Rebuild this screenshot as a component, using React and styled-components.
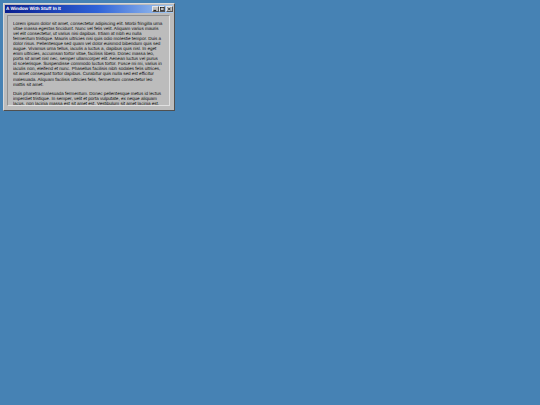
import React from "react";
import styled, { createGlobalStyle } from "styled-components";

const GlobalStyle = createGlobalStyle`
*{
  margin:0;
  padding:0;
  box-sizing:border-box;
}
body{
  background-color:#4682b4;
  width:540px;
  height:405px;
  overflow:hidden;
}`

const Desktop = styled.div`
width:540px;
height:405px;
padding:3px;`

const Window = styled.div`
width:172px;
height:108px;
display:flex;
flex-direction:column;
padding:1px;
background-color:#bcbcbc;
border-top:1px solid #d8d8d8;
border-left:1px solid #d8d8d8;
border-right:1px solid #505050;
border-bottom:1px solid #505050;`

const TitleBar = styled.div`
height:8px;
flex:none;
display:flex;
align-items:center;
justify-content:space-between;
padding:0 0.5px 0 1px;
background:linear-gradient(to right,#0a1f8f,#2f63d8 55%,#a6caf0);`

const Title = styled.span`
font-family:"Liberation Sans",Arial,sans-serif;
font-size:4.65px;
font-weight:bold;
line-height:8px;
color:#fff;
white-space:nowrap;
text-rendering:geometricPrecision;`

const Controls = styled.div`
display:flex;
align-items:center;`

const Control = styled.button`
width:6.5px;
height:6px;
margin-left:${props => props.$gap ? "1px" : "0"};
display:flex;
align-items:center;
justify-content:center;
background-color:#c0c0c0;
border:none;
border-top:1px solid #e8e8e8;
border-left:1px solid #e8e8e8;
border-right:1px solid #555;
border-bottom:1px solid #555;
svg{
  display:block;
  width:4.5px;
  height:4px;
}`

const Pane = styled.div`
flex:1;
min-height:0;
margin:2px 3px 3px 2px;
padding:4.5px 5px 0;
overflow:hidden;
background-color:#bcbcbc;
border-top:1px solid #909090;
border-left:1px solid #909090;
border-right:1px solid #e0e0e0;
border-bottom:1px solid #e0e0e0;`

const Paragraph = styled.p`
font-family:"Liberation Sans",Arial,sans-serif;
font-size:4.55px;
line-height:5.1px;
color:#000;
margin-bottom:4px;
opacity:0.95;
text-rendering:geometricPrecision;`

const Line = styled.span`
display:block;
white-space:nowrap;`

const first = [
  "Lorem ipsum dolor sit amet, consectetur adipiscing elit. Morbi fringilla urna",
  "vitae massa egestas tincidunt. Nunc vel felis velit. Aliquam varius mauris",
  "vel elit consectetur, ut varius nisi dapibus. Etiam at nibh eu nulla",
  "fermentum tristique. Mauris ultricies nisi quis odio molestie tempor. Duis a",
  "dolor risus. Pellentesque sed quam vel dolor euismod bibendum quis sed",
  "augue. Vivamus urna tellus, iaculis a luctus a, dapibus quis nisl. In eget",
  "enim ultricies, accumsan tortor vitae, facilisis libero. Donec massa leo,",
  "porta sit amet nisl nec, semper ullamcorper elit. Aenean luctus vel purus",
  "id scelerisque. Suspendisse commodo luctus tortor. Fusce mi mi, varius in",
  "iaculis non, eleifend et nunc. Phasellus facilisis nibh sodales felis ultrices,",
  "sit amet consequat tortor dapibus. Curabitur quis nulla sed est efficitur",
  "malesuada. Aliquam facilisis ultricies felis, fermentum consectetur leo",
  "mattis sit amet.",
];

const second = [
  "Duis pharetra malesuada fermentum. Donec pellentesque metus id lectus",
  "imperdiet tristique. In semper, velit et porta vulputate, ex neque aliquam",
  "lacus, non lacinia massa est sit amet est. Vestibulum sit amet lacinia est.",
];

export default function App() {
  return (
    <Desktop>
      <GlobalStyle />
      <Window>
        <TitleBar>
          <Title>A Window With Stuff In It</Title>
          <Controls>
            <Control aria-label="Minimize">
              <svg viewBox="0 0 5 4"><rect x="0.5" y="3" width="3" height="1" fill="#000" /></svg>
            </Control>
            <Control aria-label="Maximize">
              <svg viewBox="0 0 5 4"><rect x="0.5" y="0.5" width="4" height="3" fill="none" stroke="#000" strokeWidth="0.7" /></svg>
            </Control>
            <Control $gap aria-label="Close">
              <svg viewBox="0 0 5 4"><path d="M1 0.5 L4 3.5 M4 0.5 L1 3.5" stroke="#000" strokeWidth="0.8" /></svg>
            </Control>
          </Controls>
        </TitleBar>
        <Pane>
          <Paragraph>{first.map(l => <Line key={l}>{l}</Line>)}</Paragraph>
          <Paragraph>{second.map(l => <Line key={l}>{l}</Line>)}</Paragraph>
        </Pane>
      </Window>
    </Desktop>
  );
}
